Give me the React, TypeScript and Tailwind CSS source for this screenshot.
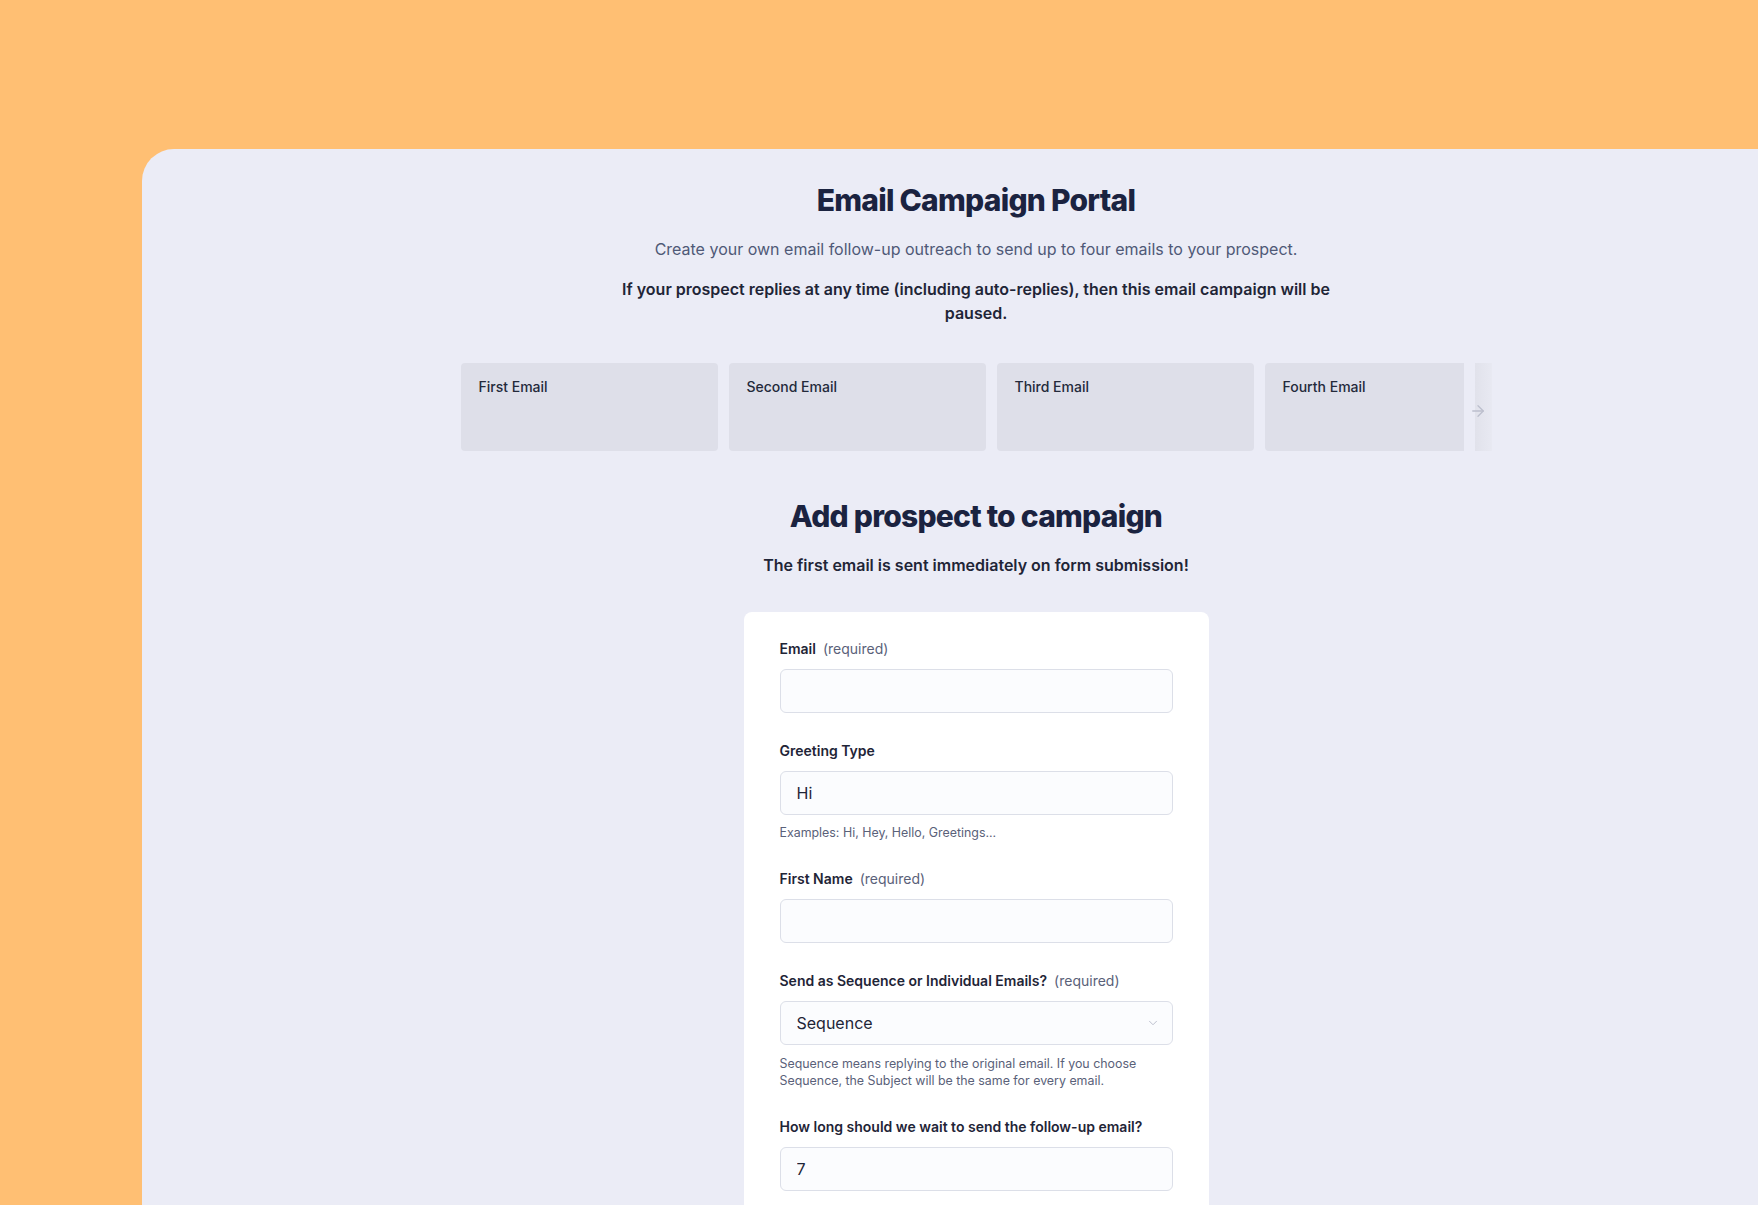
import React from "react";
import { ArrowRight, ChevronDown } from "lucide-react";

const emails = ["First Email", "Second Email", "Third Email", "Fourth Email"];

const Label = ({ text, required }: { text: string; required?: boolean }) => (
  <label className="flex items-center gap-[7px] text-sm leading-5 mb-[10px]">
    <span className="font-semibold text-[#1f2537]">{text}</span>
    {required && <span className="text-[#5a6179]">(required)</span>}
  </label>
);

const inputCls =
  "w-full h-[44px] rounded-md border-[1.5px] border-[#dcdfe8] bg-[#fbfcfe] px-4 text-base text-[#1f2537] outline-none font-[Inter,sans-serif]";

const App = () => {
  return (
    <div className="w-full h-[1205px] overflow-hidden bg-[#ffbf73] font-[Inter,sans-serif]">
      <div className="ml-[142px] mt-[149px] w-[1668px] min-h-[1100px] rounded-tl-[32px] rounded-tr-[32px] bg-[#ebecf6] pt-[33px] flex flex-col items-center">
        {/* Header */}
        <h1 className="text-[30px] leading-9 font-extrabold tracking-tight text-[#1b2340]">
          Email Campaign Portal
        </h1>
        <p className="mt-[19px] text-base leading-6 text-[#4f5977]">
          Create your own email follow-up outreach to send up to four emails to your prospect.
        </p>
        <p className="mt-4 max-w-3xl text-center text-base leading-6 font-semibold text-[#1f2537]">
          If your prospect replies at any time (including auto-replies), then this email campaign will be paused.
        </p>

        {/* Email carousel */}
        <div className="relative mt-[38px] w-[1031px] flex">
          <div className="w-[1003px] overflow-hidden flex gap-[11px]">
            {emails.map((e) => (
              <div
                key={e}
                className="w-[257px] h-[88px] shrink-0 rounded bg-[#dedfe9] pl-[18px] pt-[14px]"
              >
                <p className="text-sm leading-5 font-medium text-[#242a3b]">{e}</p>
              </div>
            ))}
          </div>
          <div className="ml-[11px] w-[17px] h-[88px] bg-gradient-to-r from-[#e1e2eb] to-[#e8e9f2]" />
          <ArrowRight
            size={18}
            strokeWidth={1.75}
            className="absolute right-[5px] top-[39px] text-[#bcbfcd]"
          />
        </div>

        {/* Add prospect */}
        <h2 className="mt-[47px] text-[30px] leading-9 font-extrabold tracking-tight text-[#1b2340]">
          Add prospect to campaign
        </h2>
        <p className="mt-[19px] text-base leading-6 font-semibold text-[#1f2537]">
          The first email is sent immediately on form submission!
        </p>

        {/* Form */}
        <div className="mt-[35px] w-[465px] rounded-lg bg-white px-9 pt-[27px] pb-10">
          <div>
            <Label text="Email" required />
            <input className={inputCls} />
          </div>

          <div className="mt-[28px]">
            <Label text="Greeting Type" />
            <input className={inputCls} defaultValue="Hi" />
            <p className="mt-[10px] text-[12.4px] leading-4 text-[#5a6179]">
              Examples: Hi, Hey, Hello, Greetings...
            </p>
          </div>

          <div className="mt-[28px]">
            <Label text="First Name" required />
            <input className={inputCls} />
          </div>

          <div className="mt-[28px]">
            <Label text="Send as Sequence or Individual Emails?" required />
            <div className="relative">
              <select className={inputCls + " appearance-none"} defaultValue="Sequence">
                <option>Sequence</option>
                <option>Individual Emails</option>
              </select>
              <ChevronDown
                size={14}
                strokeWidth={1.5}
                className="absolute right-[13px] top-[15px] text-[#b3b7c6] pointer-events-none"
              />
            </div>
            <p className="mt-[10px] text-[12.4px] leading-[17px] text-[#5a6179]">
              Sequence means replying to the original email. If you choose Sequence, the Subject will be the same for every email.
            </p>
          </div>

          <div className="mt-[28px]">
            <Label text="How long should we wait to send the follow-up email?" />
            <input className={inputCls} defaultValue="7" />
          </div>
        </div>
      </div>
    </div>
  );
};

export default App;
